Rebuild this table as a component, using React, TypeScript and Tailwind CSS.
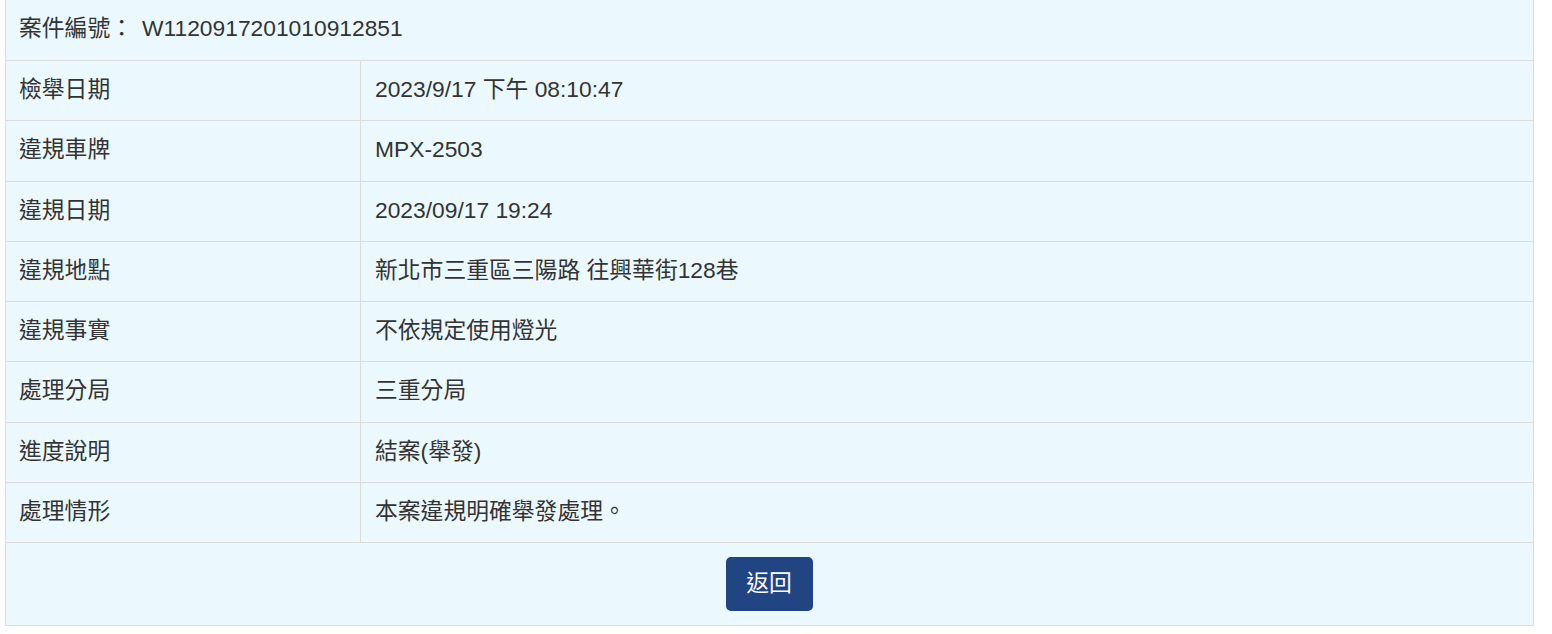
import React from "react";

const rows: [string, string][] = [
  ["檢舉日期", "2023/9/17 下午 08:10:47"],
  ["違規車牌", "MPX-2503"],
  ["違規日期", "2023/09/17 19:24"],
  ["違規地點", "新北市三重區三陽路 往興華街128巷"],
  ["違規事實", "不依規定使用燈光"],
  ["處理分局", "三重分局"],
  ["進度說明", "結案(舉發)"],
  ["處理情形", "本案違規明確舉發處理。"],
];

export default function App() {
  return (
    <div
      className="w-[1552px] h-[634px] bg-white overflow-hidden text-[#333333] text-[22.8px]"
      style={{ fontFamily: '"Liberation Sans", "Noto Sans CJK TC", sans-serif' }}
    >
      <div className="ml-[5px] w-[1529px] border-x border-b border-[#dcdcdc] bg-[#ebf9ff]">
        <div className="h-[61px] flex items-center pl-[13px] pr-[15px] pb-[3px] border-b border-[#dcdcdc]">
          <span>案件編號：</span>
          <span className="ml-[9px]">W1120917201010912851</span>
        </div>
        {rows.map(([k, v]) => (
          <div key={k} className="h-[60.25px] flex border-b border-[#dcdcdc]">
            <div className="w-[355px] flex items-center pl-[13px] pr-[15px] pb-[3px] border-r border-[#dcdcdc]">
              {k}
            </div>
            <div className="flex-1 flex items-center px-[14px] pb-[3px]">{v}</div>
          </div>
        ))}
        <div className="h-[82px] flex items-center justify-center">
          <button className="w-[87px] h-[54px] rounded-[5px] bg-[#214583] text-white text-[22.8px] ml-[-1px] pb-[2px]">
            返回
          </button>
        </div>
      </div>
    </div>
  );
}
